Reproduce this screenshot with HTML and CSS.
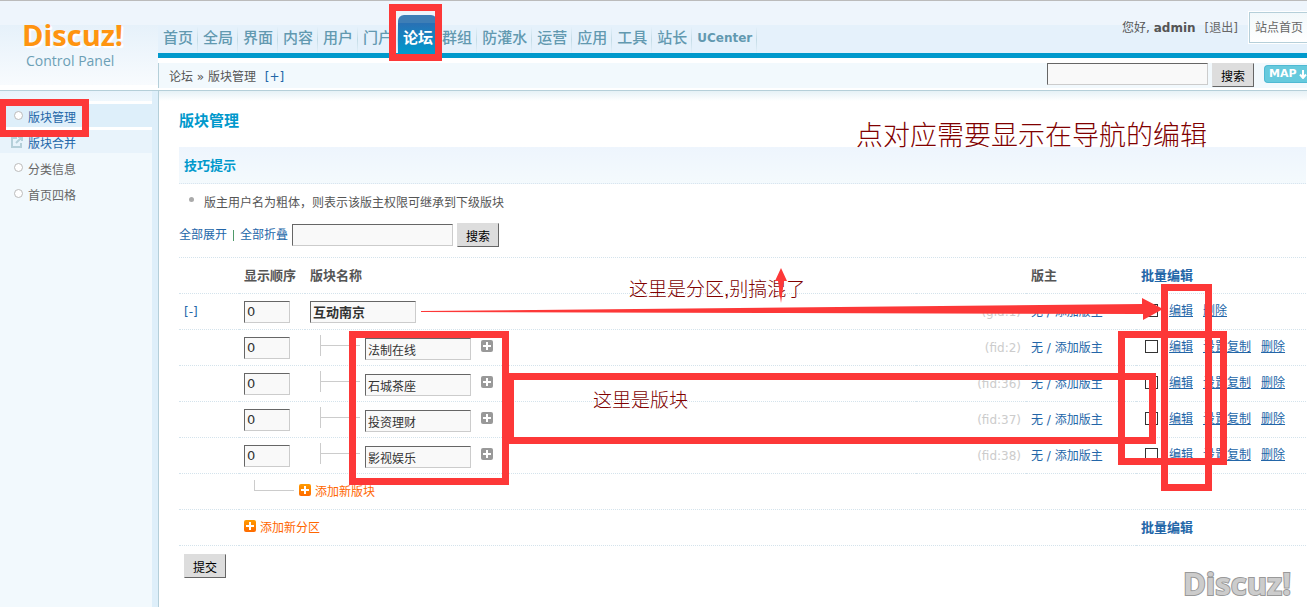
FILE: index.html
```
<!DOCTYPE html>
<html lang="zh-Hans">
<head>
  <meta charset="UTF-8">
  <meta name="viewport" content="width=device-width, initial-scale=1.0">
  <title>版块管理 - Discuz! Control Panel</title>
  <link rel="stylesheet" href="styles.css">
</head>
<body>

  <svg class="symbols" aria-hidden="true">
    <symbol id="plus" viewBox="0 0 12 12">
      <rect width="12" height="12" rx="2"/>
      <path d="M6 2v8M2 6h8" stroke="#fff" stroke-width="2"/>
    </symbol>
    <linearGradient id="orange" x1="0" y1="0" x2="0" y2="1">
      <stop offset="0" stop-color="#ff9c00"/>
      <stop offset="1" stop-color="#ff6a00"/>
    </linearGradient>
  </svg>

  <header>
    <div class="logo">
      <strong>Discuz!</strong>
      <span>Control Panel</span>
    </div>
    <div class="head-main">
      <div class="top-row">
        <nav>
          <a href="#">首页</a>
          <a href="#">全局</a>
          <a href="#">界面</a>
          <a href="#">内容</a>
          <a href="#">用户</a>
          <a href="#">门户</a>
          <a href="#" class="active">论坛</a>
          <a href="#">群组</a>
          <a href="#">防灌水</a>
          <a href="#">运营</a>
          <a href="#">应用</a>
          <a href="#">工具</a>
          <a href="#">站长</a>
          <a href="#" class="latin">UCenter</a>
        </nav>
        <div class="user">
          <span>您好, <b>admin</b></span>
          <a href="#">[退出]</a>
          <a href="#" class="site-link">站点首页</a>
        </div>
      </div>
      <div class="crumb-row">
        <div class="crumb">论坛 <i>»</i> 版块管理 <a href="#">[+]</a></div>
        <form class="search">
          <input type="text" aria-label="搜索">
          <button type="button">搜索</button>
          <a href="#" class="map">MAP
            <svg width="8" height="9" viewBox="0 0 8 9"><path d="M4 0v8M1 4.500l3 3.500 3-3.500" fill="none" stroke="#fff" stroke-width="2"/></svg>
          </a>
        </form>
      </div>
    </div>
  </header>

  <div class="container">
    <aside>
      <ul>
        <li class="current"><a href="#">版块管理</a></li>
        <li class="hover">
          <svg class="open" width="12" height="12" viewBox="0 0 12 12"><path d="M6 2H1v9h9V7M5 7l5-5M7 1h4v4" fill="none" stroke="#b5cfd9" stroke-width="2"/></svg>
          <a href="#">版块合并</a>
        </li>
        <li><a href="#">分类信息</a></li>
        <li><a href="#">首页四格</a></li>
      </ul>
    </aside>

    <main>
      <h1>版块管理</h1>
      <h2>技巧提示</h2>
      <ul class="tips">
        <li>版主用户名为粗体，则表示该版主权限可继承到下级版块</li>
      </ul>

      <form class="tools">
        <a href="#">全部展开</a>
        <span class="bar"></span>
        <a href="#">全部折叠</a>
        <input type="text" aria-label="搜索版块">
        <button type="button">搜索</button>
      </form>

      <table>
        <colgroup>
          <col class="c-toggle">
          <col class="c-order">
          <col>
          <col class="c-id">
          <col class="c-mod">
          <col class="c-ops">
        </colgroup>
        <thead>
          <tr>
            <th></th>
            <th>显示顺序</th>
            <th>版块名称</th>
            <th></th>
            <th>版主</th>
            <th><a href="#">批量编辑</a></th>
          </tr>
        </thead>
        <tbody>
          <tr>
            <td><a href="#">[-]</a></td>
            <td><input type="text" class="order" value="0" aria-label="显示顺序"></td>
            <td><input type="text" class="name group" value="互动南京" aria-label="分区名称"></td>
            <td class="id">(gid:1)</td>
            <td><a href="#">无 / 添加版主</a></td>
            <td><div class="ops"><input type="checkbox" aria-label="选择"><a href="#">编辑</a><a href="#">删除</a></div></td>
          </tr>
          <tr>
            <td></td>
            <td><input type="text" class="order" value="0" aria-label="显示顺序"></td>
            <td><div class="board"><span class="branch"></span><input type="text" class="name" value="法制在线" aria-label="版块名称"><svg class="plus"><use href="#plus"/></svg></div></td>
            <td class="id">(fid:2)</td>
            <td><a href="#">无 / 添加版主</a></td>
            <td><div class="ops"><input type="checkbox" aria-label="选择"><a href="#">编辑</a><a href="#">设置复制</a><a href="#">删除</a></div></td>
          </tr>
          <tr>
            <td></td>
            <td><input type="text" class="order" value="0" aria-label="显示顺序"></td>
            <td><div class="board"><span class="branch"></span><input type="text" class="name" value="石城茶座" aria-label="版块名称"><svg class="plus"><use href="#plus"/></svg></div></td>
            <td class="id">(fid:36)</td>
            <td><a href="#">无 / 添加版主</a></td>
            <td><div class="ops"><input type="checkbox" aria-label="选择"><a href="#">编辑</a><a href="#">设置复制</a><a href="#">删除</a></div></td>
          </tr>
          <tr>
            <td></td>
            <td><input type="text" class="order" value="0" aria-label="显示顺序"></td>
            <td><div class="board"><span class="branch"></span><input type="text" class="name" value="投资理财" aria-label="版块名称"><svg class="plus"><use href="#plus"/></svg></div></td>
            <td class="id">(fid:37)</td>
            <td><a href="#">无 / 添加版主</a></td>
            <td><div class="ops"><input type="checkbox" aria-label="选择"><a href="#">编辑</a><a href="#">设置复制</a><a href="#">删除</a></div></td>
          </tr>
          <tr>
            <td></td>
            <td><input type="text" class="order" value="0" aria-label="显示顺序"></td>
            <td><div class="board"><span class="branch"></span><input type="text" class="name" value="影视娱乐" aria-label="版块名称"><svg class="plus"><use href="#plus"/></svg></div></td>
            <td class="id">(fid:38)</td>
            <td><a href="#">无 / 添加版主</a></td>
            <td><div class="ops"><input type="checkbox" aria-label="选择"><a href="#">编辑</a><a href="#">设置复制</a><a href="#">删除</a></div></td>
          </tr>
          <tr>
            <td></td>
            <td colspan="5"><div class="add"><span class="branch last"></span><svg class="plus orange"><use href="#plus"/></svg><a href="#">添加新版块</a></div></td>
          </tr>
          <tr>
            <td></td>
            <td colspan="4"><div class="add"><svg class="plus orange"><use href="#plus"/></svg><a href="#">添加新分区</a></div></td>
            <td class="batch"><a href="#">批量编辑</a></td>
          </tr>
        </tbody>
      </table>
      <button type="button" class="submit">提交</button>
    </main>
  </div>

  <!-- tutorial marks over the page -->
  <div class="marks">
    <div class="box tab-box"></div>
    <div class="box menu-box"></div>
    <div class="box names-box"></div>
    <div class="box boards-box"></div>
    <div class="box ops-box"></div>
    <div class="box edit-box"></div>
    <p class="note note-title">点对应需要显示在导航的编辑</p>
    <p class="note note-group">这里是分区,别搞混了</p>
    <p class="note note-board">这里是版块</p>
    <svg class="arrow-long" width="742" height="22" viewBox="0 0 742 22">
      <path d="M0 13L721 6V0l21 11-20 11v-6L360 15 0 14z"/>
    </svg>
    <svg class="arrow-up" width="12" height="35" viewBox="0 0 12 35">
      <path d="M6 0l6 13H9L6 35 3 13H0z"/>
    </svg>
    <div class="watermark">Discuz!</div>
  </div>

</body>
</html>
```

FILE: styles.css
```
* {
  box-sizing: border-box;
}

body {
  margin: 0;
  min-height: 100vh;
  display: flex;
  flex-direction: column;
  position: relative;
  overflow: hidden;
  font-family: "DejaVu Sans", "Noto Sans CJK SC", sans-serif;
  font-size: 12px;
  line-height: 18px;
  color: #555;
  background: #fff;
}

a {
  color: #2366a8;
  text-decoration: none;
}

ul {
  margin: 0;
  padding: 0;
  list-style: none;
}

input, button {
  font-family: inherit;
  font-size: 12px;
  margin: 0;
}

input[type="text"] {
  width: 161px;
  height: 22px;
  padding: 0 2px;
  border: 1px solid;
  border-color: #666 #ccc #ccc #666;
  background: #f9f9f9;
  color: #333;
}

button {
  width: 42px;
  height: 24px;
  padding: 0;
  border: 1px solid;
  border-color: #ddd #666 #666 #ddd;
  background: #ddd;
  color: #000;
}

.symbols {
  position: absolute;
  width: 0;
  height: 0;
}

/* header */
header {
  display: flex;
  height: 91px;
  border-top: 1px solid #bbb;
  border-bottom: 1px solid #b5cfd9;
}

.logo {
  width: 158px;
  padding: 17px 0 0 22px;
  background: linear-gradient(#eef5fc 0, #eef5fc 24px, #e6f1fa 24px, #f8fbfe 84px, #fff 84px);
}

.logo strong {
  display: block;
  font: 700 29px/34px "Open Sans", sans-serif;
  color: #ff9410;
  text-shadow: 1px 1px 0 #fff, 2px 2px 1px #fff;
}

.logo span {
  display: block;
  padding-left: 4px;
  font: 14px/18px "Open Sans", sans-serif;
  color: #6c9fb6;
}

.head-main {
  flex: 1;
}

.top-row {
  display: flex;
  justify-content: space-between;
  height: 57px;
  border-bottom: 5px solid #0099cc;
  background: linear-gradient(#eef5fc 0, #eef5fc 24px, #e5f1fb 24px);
}

nav {
  display: flex;
  padding-top: 14px;
}

nav a {
  height: 38px;
  padding: 10px 4px 0 5px;
  font-size: 15px;
  font-weight: 500;
  line-height: 27px;
  white-space: nowrap;
  color: #6299b0;
  border-right: 1px solid;
  border-image: linear-gradient(transparent 12px, #c4dce6 24px, transparent) 1;
}

nav a.active {
  color: #fff;
  font-weight: bold;
  border: 0;
  padding-right: 4px;
  border-radius: 6px 6px 0 0;
  background: linear-gradient(#3e7eb6 8px, #2970b4 8px, #0099cc);
}

nav a.latin {
  font-size: 12px;
  font-weight: bold;
}

.user {
  display: flex;
  align-items: flex-start;
  white-space: nowrap;
}

.user > * {
  margin: 18px 9px 0 0;
}

.user a {
  color: #666;
}

.user .site-link {
  margin: 11px 0 0 2px;
  padding: 7px 4px 6px 5px;
  line-height: 16px;
  border: 1px solid #b5cfd9;
  border-right: 0;
  background: linear-gradient(#f2f8fa, #fff);
  box-shadow: 0 0 0 1px #fff;
}

.crumb-row {
  display: flex;
  justify-content: space-between;
  margin-top: 5px;
  height: 25px;
  padding-left: 10px;
  border-left: 1px solid #b5cfd9;
  background: #f2f9fd;
}

.crumb {
  line-height: 28px;
}

.crumb i {
  font-style: normal;
}

.crumb a {
  margin-left: 5px;
}

.search {
  display: flex;
  align-items: flex-start;
  gap: 4px;
}

.map {
  display: flex;
  align-items: center;
  gap: 2px;
  margin: 2px 0 0 6px;
  height: 18px;
  width: 43px;
  padding-left: 4px;
  border: 1px solid #4fb9d3;
  border-right: 0;
  border-radius: 4px 0 0 4px;
  background: #66cadd;
  color: #fff;
  font-size: 11px;
  font-weight: bold;
}

/* layout */
.container {
  display: flex;
  flex: 1;
}

aside {
  width: 159px;
  border-right: 1px solid #b5cfd9;
  background: linear-gradient(to right, #f2f9fd 152px, #deeffa 152px);
}

aside ul {
  width: 152px;
  padding-top: 13px;
  background: linear-gradient(#e8f3fb, #f0f8fd 10px, #fff 10px, #fff 13px, transparent 13px);
}

aside li {
  position: relative;
  height: 26px;
  padding: 2px 0 0 28px;
  line-height: 24px;
}

aside li::before {
  content: "";
  position: absolute;
  left: 14px;
  top: 7px;
  width: 7px;
  height: 7px;
  border: 1px solid #bbb;
  border-radius: 50%;
  background: #fff;
}

aside li a {
  color: #666;
}

aside .current {
  background: #deeffa;
  border-bottom: 3px solid #fff;
}

aside .hover {
  background: linear-gradient(#e8f3fb 23px, transparent 23px);
}

aside .hover::before {
  display: none;
}

aside .open {
  position: absolute;
  left: 11px;
  top: 6px;
}

aside .current a,
aside .hover a {
  color: #2366a8;
}

main {
  flex: 1;
  padding: 20px 1px 0 20px;
  background: linear-gradient(#e6f1f6, #fff 10px);
}

h1 {
  margin: 0;
  font-size: 15px;
  line-height: 21px;
  color: #0099cc;
}

h2 {
  margin: 15px 0 0;
  padding: 1px 0 0 5px;
  font-size: 13px;
  line-height: 35px;
  color: #0099cc;
  background: linear-gradient(#eef5fd, #f4fafd);
  border-bottom: 1px dotted #d9e6ee;
}

.tips li {
  position: relative;
  padding: 10px 0 0 25px;
}

.tips li::before {
  content: "";
  position: absolute;
  left: 10px;
  top: 13px;
  width: 5px;
  height: 5px;
  border-radius: 50%;
  background: #aaa;
}

.tools {
  display: flex;
  align-items: center;
  gap: 4px;
  margin: 11px 0 10px;
}

.tools .bar {
  width: 1px;
  height: 11px;
  margin: 0 2px;
  background: #4f9a6a;
}

/* board list */
table {
  width: 100%;
  table-layout: fixed;
  border-spacing: 0;
  border-top: 1px dotted #d4e3ec;
}

.c-toggle { width: 60px; }
.c-order { width: 66px; }
.c-id { width: 110px; }
.c-mod { width: 110px; }
.c-ops { width: 170px; }

th, td {
  height: 36px;
  padding: 0 5px;
  text-align: left;
  white-space: nowrap;
  border-bottom: 1px dotted #d4e3ec;
}

th {
  padding-top: 1px;
}

th, .batch {
  font-size: 13px;
  font-weight: bold;
}

td input {
  display: block;
}

input.order {
  width: 46px;
  font-size: 13px;
}

input.name {
  width: 106px;
}

input.group {
  font-size: 13px;
  font-weight: bold;
}

.id {
  text-align: right;
  color: #ccc;
}

.board {
  display: flex;
  align-items: center;
  padding-left: 10px;
}

.board .name {
  margin-top: 3px;
}

.branch {
  width: 40px;
  height: 21px;
  margin: 0 5px 4px 0;
  border-left: 1px solid #ccc;
  background: linear-gradient(#ccc, #ccc) 0 10px / 40px 1px no-repeat;
}

.last {
  height: 11px;
  margin-bottom: 12px;
}

.plus {
  width: 12px;
  height: 12px;
  margin: 0 0 4px 10px;
  fill: #999;
}

.orange {
  margin-left: 0;
  margin-right: 4px;
  fill: url(#orange);
}

.add {
  display: flex;
  align-items: center;
}

.add .last {
  margin-left: 10px;
}

.add a {
  padding-top: 1px;
  color: #ff6600;
}

.ops {
  display: flex;
  align-items: center;
  gap: 10px;
  padding: 0 0 2px 4px;
}

.ops a {
  text-decoration: underline;
}

.ops input {
  appearance: none;
  width: 13px;
  height: 13px;
  margin-right: 1px;
  border: 1px solid #333;
  background: #fff;
}

.submit {
  margin: 8px 0 0 5px;
}

/* tutorial marks */
.marks {
  position: absolute;
  inset: 0;
  pointer-events: none;
}

.marks > * {
  position: absolute;
}

.box {
  border: 7px solid #fd3838;
}

.tab-box { left: 389px; top: 4px; width: 53px; height: 57px; }
.menu-box { left: -1px; top: 99px; width: 90px; height: 38px; }
.names-box { left: 349px; top: 331px; width: 160px; height: 154px; }
.boards-box { left: 507px; top: 373px; width: 649px; height: 71px; }
.ops-box { left: 1118px; top: 331px; width: 109px; height: 134px; }
.edit-box { left: 1161px; top: 284px; width: 51px; height: 207px; }

.note {
  margin: 0;
  font-family: "Liberation Sans", "Noto Sans CJK SC", sans-serif;
  font-weight: 300;
  font-size: 19px;
  line-height: 28px;
  white-space: nowrap;
  color: #800000;
}

.note-title { left: 856px; top: 122px; font-size: 27px; }
.note-group { left: 629px; top: 276px; }
.note-board { left: 593px; top: 387px; }

.arrow-long { left: 421px; top: 298px; fill: #fd3838; }
.arrow-up { left: 775px; top: 268px; fill: #fd3838; }

.watermark {
  right: 16px;
  bottom: 4px;
  font: 700 31px/40px "Open Sans", sans-serif;
  color: #ccc;
  -webkit-text-stroke: 2px #999;
  paint-order: stroke fill;
}
```
